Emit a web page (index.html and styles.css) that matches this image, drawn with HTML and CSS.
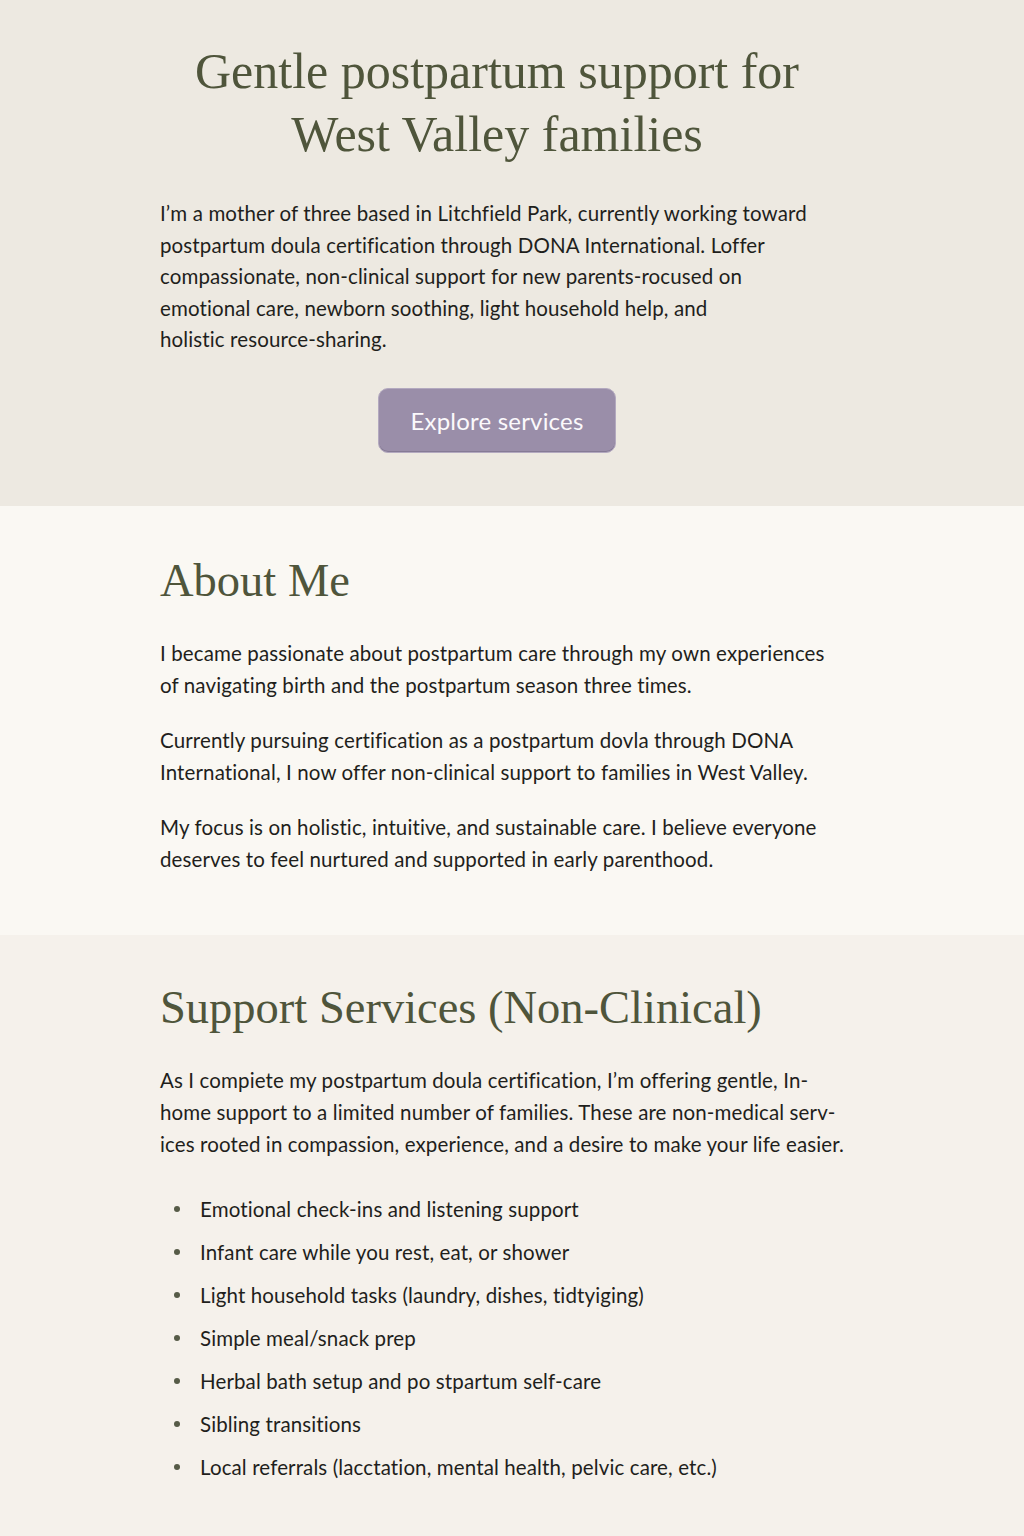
FILE: index.html
```html
<!DOCTYPE html>
<html lang="en">
<head>
<meta charset="utf-8">
<title>Postpartum support</title>
<link rel="stylesheet" href="styles.css">
</head>
<body>
<section class="hero">
  <div class="container hero-inner">
    <h1 class="hero-title">Gentle postpartum support for<br>West Valley families</h1>
    <p class="hero-text">I’m a mother of three based in Litchfield Park, currently working toward<br>postpartum doula certification through DONA International. Loffer<br>compassionate, non-clinical support for new parents-rocused on<br>emotional care, newborn soothing, light household help, and<br>holistic resource-sharing.</p>
    <div class="btn-row"><a class="btn" href="#services">Explore services</a></div>
  </div>
</section>
<section class="about">
  <div class="container">
    <h2 class="section-title">About Me</h2>
    <p class="text">I became passionate about postpartum care through my own experiences<br>of navigating birth and the postpartum season three times.</p>
    <p class="text">Currently pursuing certification as a postpartum dovla through DONA<br>International, I now offer non-clinical support to families in West Valley.</p>
    <p class="text">My focus is on holistic, intuitive, and sustainable care. I believe everyone<br>deserves to feel nurtured and supported in early parenthood.</p>
  </div>
</section>
<section class="services" id="services">
  <div class="container">
    <h2 class="section-title">Support Services (Non-Clinical)</h2>
    <p class="text">As I compiete my postpartum doula certification, I’m offering gentle, In-<br>home support to a limited number of families. These are non-medical serv-<br>ices rooted in compassion, experience, and a desire to make your life easier.</p>
    <ul class="list">
      <li>Emotional check-ins and listening support</li>
      <li>Infant care while you rest, eat, or shower</li>
      <li>Light household tasks (laundry, dishes, tidtyiging)</li>
      <li>Simple meal/snack prep</li>
      <li>Herbal bath setup and po stpartum self-care</li>
      <li>Sibling transitions</li>
      <li>Local referrals (lacctation, mental health, pelvic care, etc.)</li>
    </ul>
  </div>
</section>
</body>
</html>
```
FILE: styles.css
```css
* { box-sizing: border-box; }
html, body { margin: 0; padding: 0; }
body {
  font-family: Lato, "Open Sans", sans-serif;
  color: #1f1f1c;
  background: #f5f1eb;
}
.container {
  width: 704px;
  margin: 0 auto;
}
.hero {
  background: #ede9e1;
  padding: 40px 0 53px;
}
.hero-inner { padding-right: 30px; }
.hero-title {
  margin: 0;
  font-family: "Liberation Serif", serif;
  font-weight: 400;
  font-size: 50px;
  line-height: 63px;
  color: #4f553b;
  text-align: center;
}
.hero-text {
  margin: 32px 0 0;
  font-size: 20.5px;
  letter-spacing: 0.12px;
  line-height: 31.5px;
}
.btn-row {
  display: flex;
  justify-content: center;
  margin-top: 32px;
}
.btn {
  display: flex;
  align-items: center;
  justify-content: center;
  width: 238px;
  height: 65px;
  border-radius: 10px;
  background: #9a8ea9;
  border: 1px solid #b3a9bf;
  box-shadow: inset 0 -1px 0 #857a95;
  color: #fbf9fc;
  font-size: 24px;
  letter-spacing: 0.2px;
  text-decoration: none;
}
.about {
  background: #faf8f3;
  padding: 47px 0 60px;
}
.services {
  background: #f5f1eb;
  padding: 45px 0 53px;
}
.section-title {
  margin: 0;
  font-family: "Liberation Serif", serif;
  font-weight: 400;
  font-size: 46.5px;
  line-height: 56px;
  color: #4f553b;
}
.text {
  margin: 0;
  font-size: 20.5px;
  letter-spacing: 0.12px;
  line-height: 32px;
}
.text + .text { margin-top: 23px; }
.section-title + .text { margin-top: 28px; }
.list {
  margin: 33px 0 0;
  padding: 0;
  list-style: none;
  display: flex;
  flex-direction: column;
  gap: 11px;
}
.list li {
  position: relative;
  padding-left: 40px;
  font-size: 20.5px;
  letter-spacing: 0.12px;
  line-height: 32px;
}
.list li::before {
  content: "";
  position: absolute;
  left: 14px;
  top: 13px;
  width: 6px;
  height: 6px;
  border-radius: 50%;
  background: #565b47;
}
```
